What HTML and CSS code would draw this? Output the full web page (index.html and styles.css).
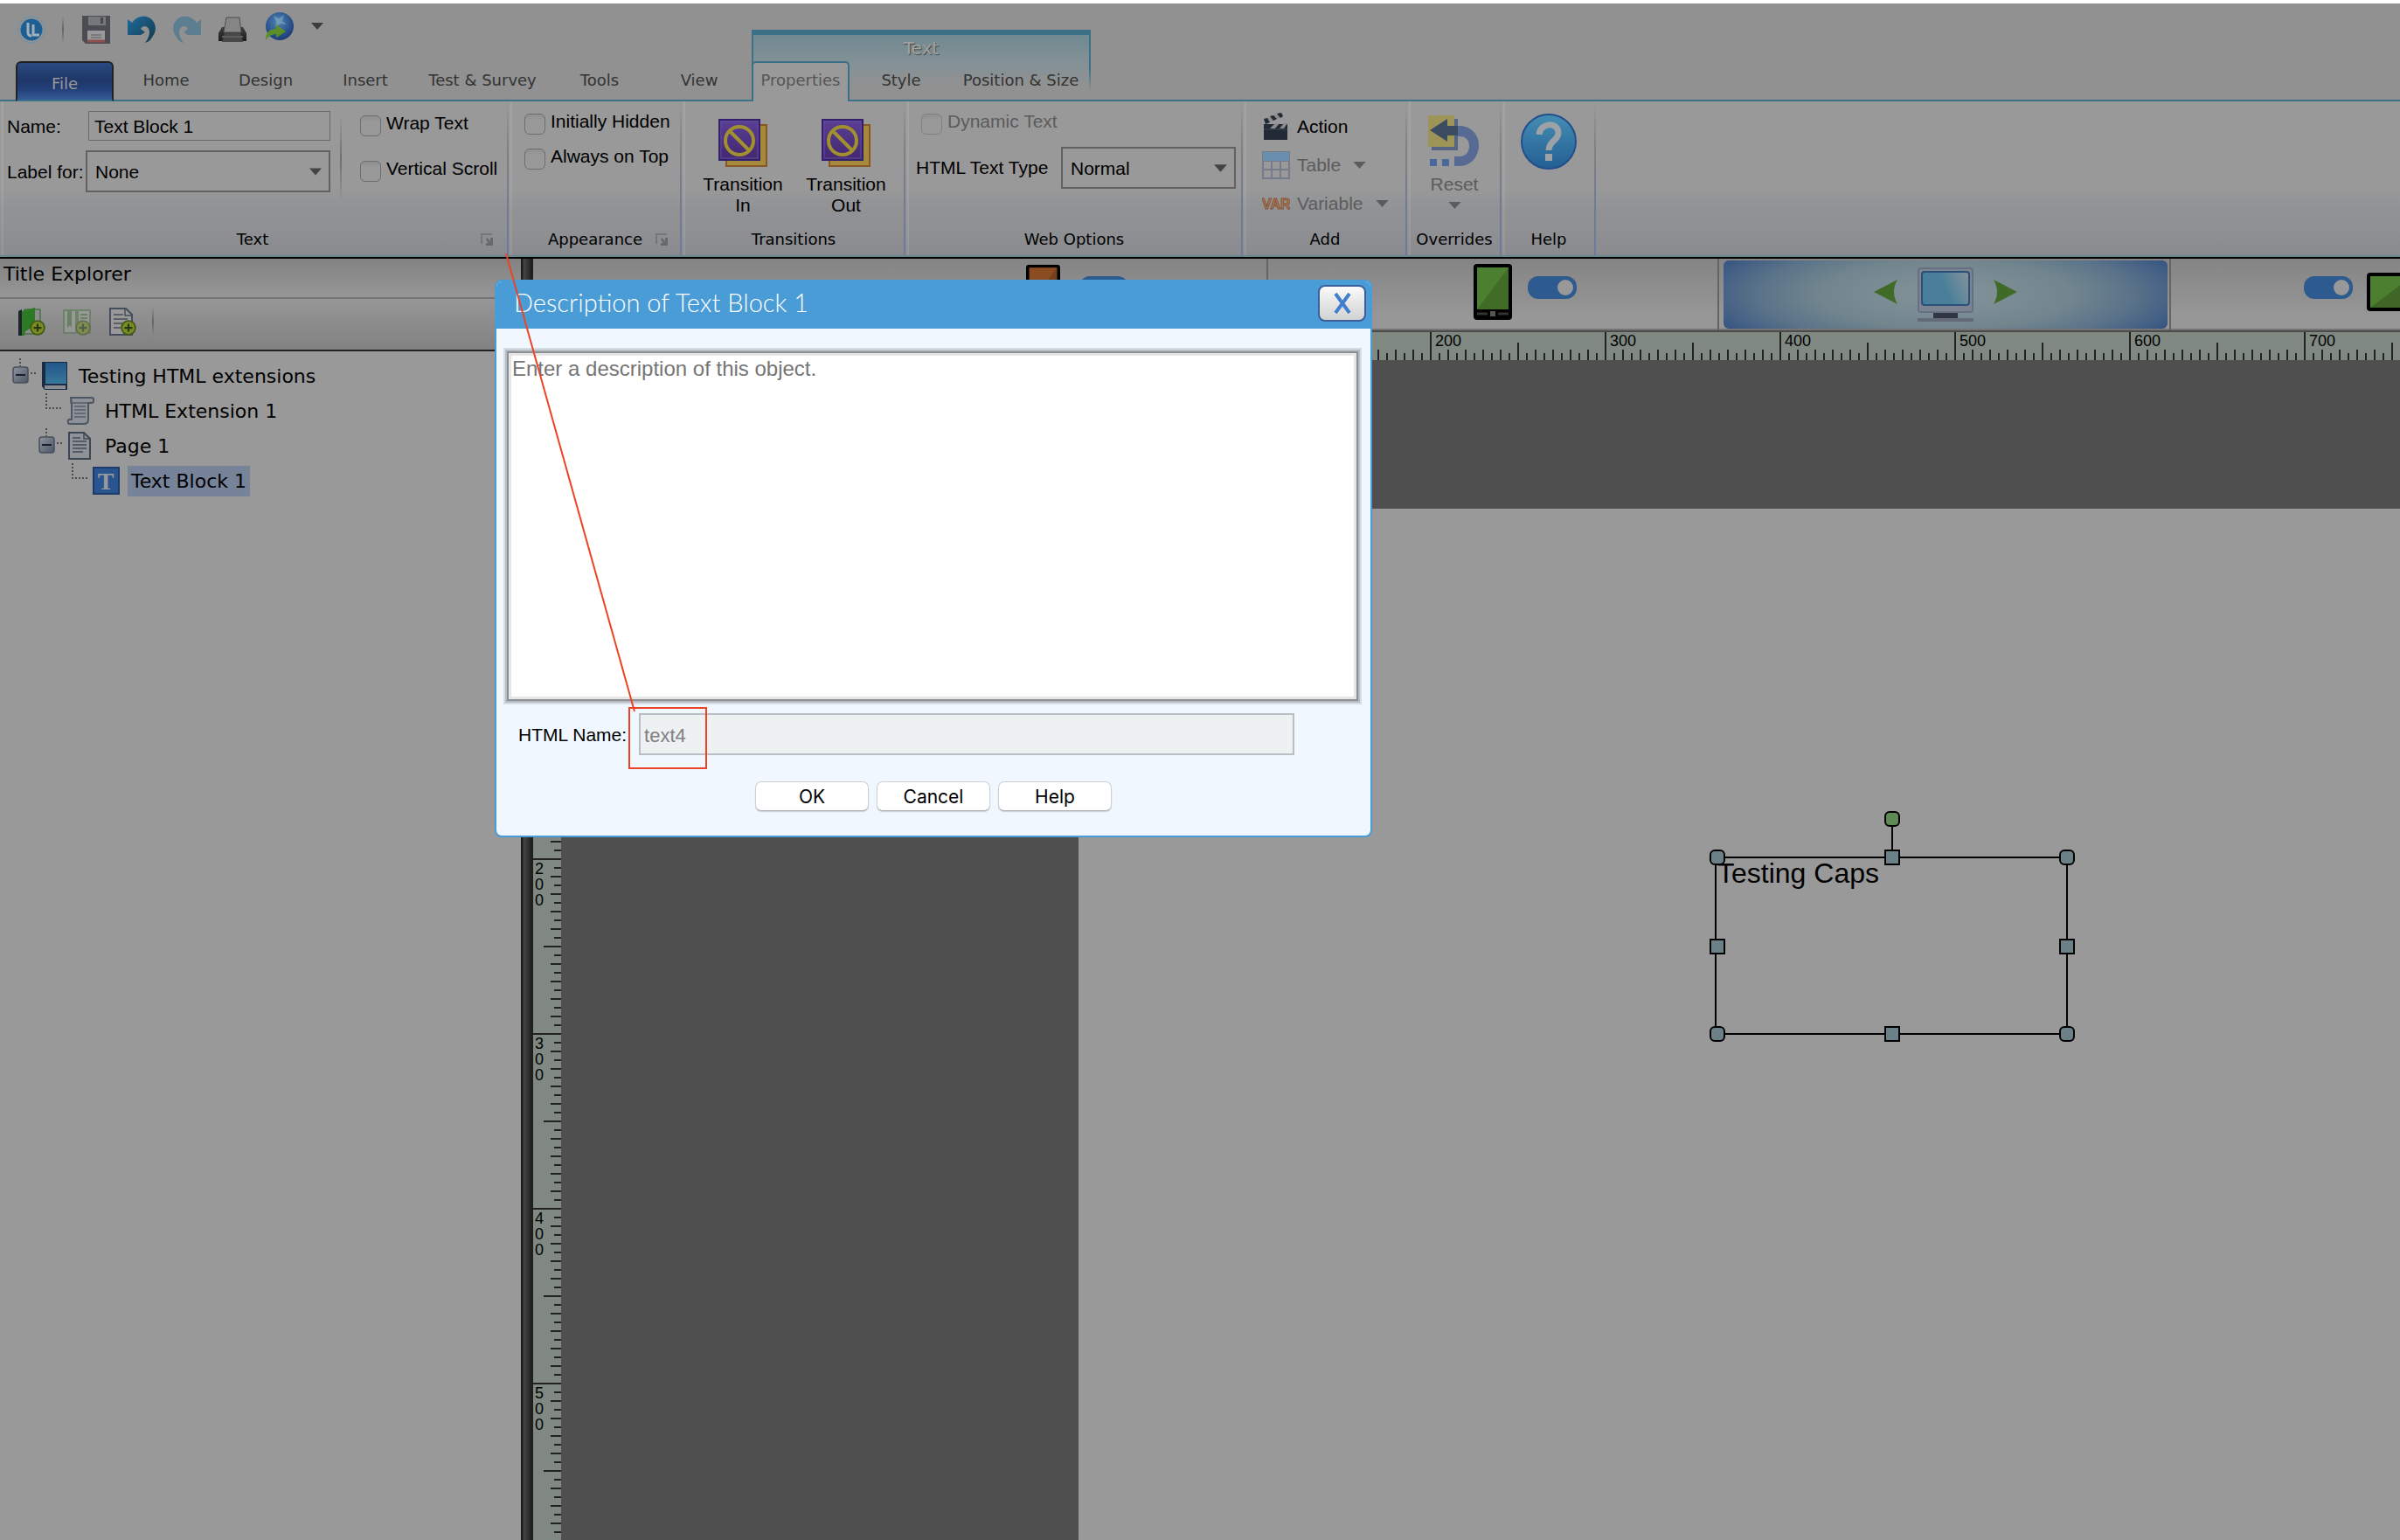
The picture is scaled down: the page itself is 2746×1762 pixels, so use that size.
FILE: index.html
```html
<!DOCTYPE html>
<html lang="en">
<head>
<meta charset="utf-8">
<title>Testing HTML extensions</title>
<link rel="stylesheet" href="styles.css">
</head>
<body>
<svg class="defs" aria-hidden="true">
  <defs>
    <linearGradient id="gPurple" x1="0" y1="0" x2="0" y2="1"><stop offset="0" stop-color="#5a3f96"/><stop offset="1" stop-color="#42266f"/></linearGradient>
    <linearGradient id="gHelp" x1="0" y1="0" x2="0" y2="1"><stop offset="0" stop-color="#458db4"/><stop offset="1" stop-color="#235f93"/></linearGradient>
    <linearGradient id="gUndo" x1="0" y1="0" x2="1" y2="1"><stop offset="0" stop-color="#1d6c9c"/><stop offset="1" stop-color="#16374c"/></linearGradient>
    <linearGradient id="gPrint" x1="0" y1="0" x2="0" y2="1"><stop offset="0" stop-color="#3f3f3f"/><stop offset="1" stop-color="#1c1c1c"/></linearGradient>
    <radialGradient id="gGlobe" cx=".45" cy=".35" r=".65"><stop offset="0" stop-color="#4e86b4"/><stop offset="1" stop-color="#1c3b78"/></radialGradient>
    <linearGradient id="gScreen" x1="0" y1=".3" x2="1" y2="0"><stop offset=".4" stop-color="#4a7f9b"/><stop offset="1" stop-color="#87939a"/></linearGradient>
    <linearGradient id="gBook" x1="0" y1="0" x2="0" y2="1"><stop offset="0" stop-color="#235588"/><stop offset="1" stop-color="#38789c"/></linearGradient>
    <linearGradient id="gBox" x1="0" y1="0" x2="1" y2="1"><stop offset="0" stop-color="#8e949c"/><stop offset="1" stop-color="#4c5666"/></linearGradient>
    <symbol id="caret" viewBox="0 0 16 9"><path d="M0 0h16L8 9z" fill="currentColor"/></symbol>
    <symbol id="launcher" viewBox="0 0 16 16"><path d="M1 13V2h12" fill="none" stroke="#747679" stroke-width="2"/><path d="M7 6l4 4V6h3v9H6v-3h3L6 8z" fill="#66686b"/></symbol>
    <symbol id="transition" viewBox="0 0 56 55">
      <rect x="9" y="7" width="46" height="47" fill="#a5893c" stroke="#8a5722" stroke-width="2"/>
      <rect x="1" y="1" width="46" height="46" fill="url(#gPurple)" stroke="#32206a" stroke-width="2"/>
      <rect x="3" y="3" width="42" height="42" fill="none" stroke="#634d9c"/>
      <circle cx="24" cy="25" r="16" fill="none" stroke="#a1902f" stroke-width="4"/>
      <path d="M13 14l22 22" stroke="#a1902f" stroke-width="4"/>
    </symbol>
    <symbol id="phone" viewBox="0 0 44 64">
      <rect width="44" height="64" rx="4" fill="#000"/><rect x="4" y="4" width="36" height="48" fill="currentColor"/>
      <path d="M40 4v48H4z" fill="#000" opacity=".15"/><path d="M4 57h12M28 57h12" stroke="#333" stroke-width="3"/><rect x="19" y="54" width="6" height="6" fill="#555"/>
    </symbol>
    <symbol id="toggle" viewBox="0 0 56 26"><rect width="56" height="26" rx="12" fill="#2d5b8f"/><circle cx="43" cy="13" r="9" fill="#999"/></symbol>
    <symbol id="plus" viewBox="0 0 16 16"><circle cx="8" cy="8" r="7" fill="#7c8c22" stroke="#3e5a16" stroke-width="1.6"/><path d="M8 4v8M4 8h8" stroke="#253a12" stroke-width="2"/></symbol>
    <symbol id="collapse" viewBox="0 0 34 40">
      <path d="M11 0v9M23 17h7" stroke="#333" stroke-width="1.5" stroke-dasharray="2 2"/>
      <rect x="3" y="10" width="17" height="18" rx="3" fill="url(#gBox)" stroke="#48505c" stroke-width="1.5"/><path d="M6 19h11" stroke="#15202e" stroke-width="2"/>
    </symbol>
    <symbol id="elbow" viewBox="0 0 34 40"><path d="M11 0v17h18" fill="none" stroke="#333" stroke-width="1.5" stroke-dasharray="2 2"/></symbol>
  </defs>
</svg>

<header class="topbar">
  <div class="quick">
    <button class="bare" aria-label="Application menu"><svg width="32" height="32" viewBox="0 0 32 32"><circle cx="16" cy="16" r="15" fill="#8e9599" stroke="#6f8fa3"/><circle cx="16" cy="16" r="12.500" fill="#1d5f93"/><path d="M12 8v11c0 3 2 4 4 4M18 10v12h7" fill="none" stroke="#a4b0b8" stroke-width="3"/></svg></button>
    <span class="quick-rule"></span>
    <button class="bare" aria-label="Save"><svg width="32" height="32" viewBox="0 0 32 32"><path d="M0 0h32v32H4l-4-4z" fill="#4c4d54"/><rect x="7" y="1" width="20" height="10" fill="#77787c"/><rect x="21" y="2" width="3" height="7" fill="#47484e"/><rect x="6" y="17" width="20" height="13" fill="#999"/><path d="M10 22h12M10 25h12" stroke="#6e7076" stroke-width="1.500"/><path d="M6 29h20" stroke="#8d4f4b" stroke-width="3"/></svg></button>
    <button class="bare" aria-label="Undo"><svg width="32" height="32" viewBox="0 0 32 32"><path d="M0 4l5 4C10 1 17 0 22 1c9 3 13 13 7 22-2 4-5 7-9 8 5-7 6-12 4-16-2-4-7-4-9 0l5 4-5 3-15 0z" fill="url(#gUndo)"/></svg></button>
    <button class="bare" aria-label="Redo"><svg width="32" height="32" viewBox="0 0 32 32"><path d="M32 4l-5 4C22 1 15 0 10 1 1 4-3 14 3 23c2 4 5 7 9 8-5-7-6-12-4-16 2-4 7-4 9 0l-5 4 5 3h15z" fill="#5c7e90"/></svg></button>
    <button class="bare" aria-label="Print"><svg width="32" height="32" viewBox="0 0 32 32"><path d="M0 20l4-7h24l4 7v9H0z" fill="url(#gPrint)"/><path d="M9 2h15l2 17H6z" fill="#858585" stroke="#505050"/><path d="M7 20h18l3 10H4z" fill="#484848"/><path d="M4 24h24" stroke="#5e5e5e" stroke-width="2"/></svg></button>
    <button class="bare raised" aria-label="Publish"><svg width="32" height="32" viewBox="0 0 32 32"><circle cx="16" cy="16" r="16" fill="url(#gGlobe)"/><path d="M9 4l6 3 6-4-2 7 5 4-7-1-6 4 1-6z" fill="#7fa3bd" opacity=".7"/><path d="M0 32c0-9 4-13 12-13v-5l11 8-11 7v-4c-5 0-8 2-12 7z" fill="#5a8f26"/></svg></button>
    <button class="bare more" aria-label="Customize toolbar"><svg width="14" height="8"><use href="#caret"/></svg></button>
  </div>
  <nav class="tabs">
    <a href="#" class="file-tab">File</a>
    <a href="#" class="tab">Home</a><a href="#" class="tab">Design</a><a href="#" class="tab">Insert</a><a href="#" class="tab wide">Test &amp; Survey</a><a href="#" class="tab">Tools</a><a href="#" class="tab">View</a>
    <div class="context">
      <span class="context-name">Text</span>
      <div class="context-tabs"><a href="#" class="tab active">Properties</a><a href="#" class="tab">Style</a><a href="#" class="tab wide">Position &amp; Size</a></div>
    </div>
  </nav>
</header>

<section class="ribbon">
  <div class="group g-text">
    <div class="group-body">
      <div class="fields">
        <label for="name">Name:</label><input id="name" class="name-box" type="text" value="Text Block 1">
        <label for="labelfor">Label for:</label>
        <div class="drop"><select id="labelfor"><option>None</option></select><svg width="14" height="9"><use href="#caret"/></svg></div>
      </div>
      <div class="checks roomy"><label><input type="checkbox">Wrap Text</label><label><input type="checkbox">Vertical Scroll</label></div>
    </div>
    <footer><span>Text</span><button class="bare" aria-label="Text settings"><svg width="16" height="16"><use href="#launcher"/></svg></button></footer>
  </div>
  <div class="group g-appearance">
    <div class="group-body"><div class="checks"><label><input type="checkbox">Initially Hidden</label><label><input type="checkbox">Always on Top</label></div></div>
    <footer><span>Appearance</span><button class="bare" aria-label="Appearance settings"><svg width="16" height="16"><use href="#launcher"/></svg></button></footer>
  </div>
  <div class="group g-transitions">
    <div class="group-body">
      <button class="big"><svg width="56" height="55"><use href="#transition"/></svg><span>Transition<br>In</span></button>
      <button class="big"><svg width="56" height="55"><use href="#transition"/></svg><span>Transition<br>Out</span></button>
    </div>
    <footer><span>Transitions</span></footer>
  </div>
  <div class="group g-web">
    <div class="group-body">
      <div class="checks"><label class="off"><input type="checkbox" disabled>Dynamic Text</label></div>
      <div class="type-row"><label for="texttype">HTML Text Type</label><div class="drop"><select id="texttype"><option>Normal</option></select><svg width="15" height="9"><use href="#caret"/></svg></div></div>
    </div>
    <footer><span>Web Options</span></footer>
  </div>
  <div class="group g-add">
    <div class="group-body">
      <button class="item"><svg width="32" height="32" viewBox="0 0 32 32"><path d="M2 13h27v18H2z" fill="#222a35"/><path d="M2 19h27" stroke="#3c4552"/><path d="M2 7L22 0l3 4L4 13z" fill="#8c8c8c"/><path d="M2 7l4-1 3 5-5 2zM9 4l4-1 4 4-4 2zM17 1l5-1 2 4-3 2z" fill="#222a35"/><path d="M9 18l6-6h5l-5 6zM20 18l5-6h4l-4 6z" fill="#8c8c8c"/></svg><span>Action</span></button>
      <button class="item off" disabled><svg width="32" height="32" viewBox="0 0 32 32"><rect width="32" height="32" fill="#757b88"/><rect x="1" y="1" width="30" height="10" fill="#6a8eae"/><path d="M2 12h8v8H2zM12 12h8v8h-8zM22 12h8v8h-8zM2 22h8v8H2zM12 22h8v8h-8zM22 22h8v8h-8z" fill="#999"/></svg><span>Table</span><svg width="15" height="8"><use href="#caret"/></svg></button>
      <button class="item off" disabled><svg width="32" height="32" viewBox="0 0 32 32"><text x="0" y="22" class="var-glyph">VAR</text></svg><span>Variable</span><svg width="15" height="8"><use href="#caret"/></svg></button>
    </div>
    <footer><span>Add</span></footer>
  </div>
  <div class="group g-narrow">
    <div class="group-body">
      <button class="big off" disabled><svg width="60" height="59" viewBox="0 0 60 59"><path d="M4 4h30v36H4z" fill="#556482"/><path d="M0 0h30v36H0z" fill="#9d9458"/><path d="M30 12h6c12 0 22 9 22 22S49 58 36 58h-6V47h6c7 0 11-5 11-12s-4-11-11-11h-6z" fill="#566a94"/><path d="M2 17L22 4v8h12v11H22v7z" fill="#3c4b60"/><path d="M2 50h8v8H2zM16 50h8v8h-8z" fill="#4c689a"/></svg><span>Reset</span><svg width="15" height="8"><use href="#caret"/></svg></button>
    </div>
    <footer><span>Overrides</span></footer>
  </div>
  <div class="group g-narrow">
    <div class="group-body"><button class="big help" aria-label="Help"><svg width="64" height="64" viewBox="0 0 64 64"><circle cx="32" cy="32" r="31" fill="url(#gHelp)" stroke="#214f8c" stroke-width="2"/><path d="M21 24C22 10 43 9 43 22c0 9-11 9-11 20" fill="none" stroke="#9da2a6" stroke-width="7"/><rect x="28" y="46" width="8" height="8" fill="#9da2a6"/></svg></button></div>
    <footer><span>Help</span></footer>
  </div>
</section>

<main class="workspace">
  <aside class="explorer">
    <h2>Title Explorer</h2>
    <div class="explorer-tools">
      <button class="bare" aria-label="Add chapter"><svg width="32" height="32" viewBox="0 0 32 32"><path d="M1 4l4-2v30H1z" fill="#1c2430"/><path d="M8 2h18v28H8z" fill="#8c8c8c" stroke="#2d5c22"/><path d="M5 4l15-4v20L8 28v4H5z" fill="#2c7a24"/><use href="#plus" x="14" y="14" width="18" height="18"/></svg></button>
      <button class="bare" aria-label="Add section" disabled><svg width="32" height="32" viewBox="0 0 32 32" opacity=".55"><path d="M1 3h14v26H1zM17 3h14v26H17z" fill="#a0a0a0" stroke="#55784e" stroke-width="2"/><path d="M5 3h5v20l-2-3-3 3z" fill="#47793f"/><path d="M20 8h8M20 12h8" stroke="#47793f" stroke-width="2"/><use href="#plus" x="14" y="14" width="18" height="18"/></svg></button>
      <button class="bare" aria-label="Add page"><svg width="32" height="32" viewBox="0 0 32 32"><path d="M2 1h18l7 7v23H2z" fill="#999" stroke="#454c5a" stroke-width="2"/><path d="M19 1v8h8M6 8h11M6 13h16M6 18h10M6 23h8" fill="none" stroke="#454c5a" stroke-width="1.500"/><use href="#plus" x="14" y="14" width="18" height="18"/></svg></button>
      <span class="tool-rule"></span>
    </div>
    <ul class="tree">
      <li class="node"><svg width="34" height="40"><use href="#collapse"/></svg><svg width="32" height="32" viewBox="0 0 32 32"><path d="M2 0h29v32H5l-3-4z" fill="#1b2b43"/><path d="M6 1h24v24H6z" fill="url(#gBook)"/><path d="M5 27h24v4H5z" fill="#8a8d92"/></svg><span>Testing HTML extensions</span></li>
      <li class="node level-1"><svg width="34" height="40"><use href="#elbow"/></svg><svg width="32" height="32" viewBox="0 0 32 32"><path d="M5 1h24c3 0 3 6 0 6h-4v19c0 3-2 5-5 5H4c-3 0-3-6 0-5h2V7z" fill="#8e9197" stroke="#4e5664" stroke-width="2"/><path d="M5 2v5h20M9 11h13M9 15h13M9 19h13M9 23h13" fill="none" stroke="#555c6b" stroke-width="1.500"/></svg><span>HTML Extension 1</span></li>
      <li class="node level-1"><svg width="34" height="40"><use href="#collapse"/></svg><svg width="32" height="32" viewBox="0 0 32 32"><path d="M3 1h17l7 7v23H3z" fill="#8f9296" stroke="#3f4653" stroke-width="2"/><path d="M20 1v7h7M7 7h9M7 11h16M7 15h16M7 19h16M7 23h12" fill="none" stroke="#434b5a" stroke-width="1.500"/></svg><span>Page 1</span></li>
      <li class="node level-2 selected"><svg width="34" height="40"><use href="#elbow"/></svg><svg class="t-icon" width="32" height="32" viewBox="0 0 32 32"><rect x="1" y="1" width="29" height="30" fill="#2a5490" stroke="#1b3b6c" stroke-width="2"/><text x="15" y="26" text-anchor="middle" class="t-glyph">T</text></svg><span>Text Block 1</span></li>
    </ul>
  </aside>
  <div class="splitter"></div>
  <div class="editor">
    <div class="devices">
      <div class="device first"></div>
      <div class="device second"><svg class="orange" width="39" height="58" viewBox="0 0 44 64"><use href="#phone"/></svg><svg width="56" height="26"><use href="#toggle"/></svg></div>
      <div class="device"><svg class="green" width="44" height="64"><use href="#phone"/></svg><svg width="56" height="26"><use href="#toggle"/></svg></div>
      <div class="device current"><div class="glow">
        <svg width="28" height="28" viewBox="0 0 28 28"><path d="M0 14L27 0q-8 14 0 28z" fill="#3f6b27"/></svg>
        <svg width="64" height="62" viewBox="0 0 64 62"><rect x="1" y="1" width="62" height="50" rx="3" fill="#7c8494" stroke="#676f82" stroke-width="2"/><rect x="5" y="5" width="54" height="38" rx="3" fill="url(#gScreen)" stroke="#2b5179" stroke-width="2"/><rect x="18" y="52" width="28" height="7" fill="#303642"/><rect y="58" width="64" height="4" fill="#656a78"/></svg>
        <svg width="28" height="28" viewBox="0 0 28 28"><path d="M28 14L1 0q8 14 0 28z" fill="#3f6b27"/></svg>
      </div></div>
      <div class="device last"><svg width="56" height="26"><use href="#toggle"/></svg><svg width="64" height="44" viewBox="0 0 64 44"><rect width="64" height="44" rx="4" fill="#000"/><rect x="4" y="4" width="48" height="36" fill="#4d7f30"/><path d="M52 4v36H4z" fill="#3f6527"/></svg></div>
    </div>
    <div class="ruler-x"><span class="stub"></span><span></span><span></span><span></span><span></span><span></span><span>200</span><span>300</span><span>400</span><span>500</span><span>600</span><span>700</span></div>
    <div class="stage">
      <div class="ruler-y"><span class="stub"></span><span></span><span>200</span><span>300</span><span>400</span><span>500</span></div>
      <div class="canvas">
        <div class="sheet">
          <div class="object">Testing Caps
            <i class="stem"></i><i class="grip round spin"></i>
            <i class="grip round nw"></i><i class="grip n"></i><i class="grip round ne"></i>
            <i class="grip w"></i><i class="grip e"></i>
            <i class="grip round sw"></i><i class="grip s"></i><i class="grip round se"></i>
          </div>
        </div>
      </div>
    </div>
  </div>
</main>

<form class="dialog" role="dialog" aria-labelledby="dlg-title">
  <header><h1 id="dlg-title">Description of Text Block 1</h1><button type="button" class="close" aria-label="Close"><svg width="20" height="24" viewBox="0 0 20 24"><path d="M2 1l16 22M18 1L2 23" stroke="#3f7fd0" stroke-width="4"/></svg></button></header>
  <div class="dialog-body">
    <textarea aria-label="Description" placeholder="Enter a description of this object."></textarea>
    <div class="name-row"><label for="htmlname">HTML Name:</label><input id="htmlname" type="text" value="text4" disabled></div>
    <div class="actions"><button type="button">OK</button><button type="button">Cancel</button><button type="button">Help</button></div>
  </div>
</form>

<svg class="callout" aria-hidden="true"><path d="M579 290L726 814" stroke-width="2"/><rect x="720" y="810" width="88" height="69" stroke-width="2"/></svg>
</body>
</html>
```

FILE: styles.css
```css
* { box-sizing: border-box; }
body {
  margin: 0;
  min-height: 100vh;
  display: flex;
  flex-direction: column;
  position: relative;
  overflow: hidden;
  background: #999;
  color: #000;
  font: 21px/24px "Liberation Sans", Arial, sans-serif;
}
svg { display: block; flex: none; }
.defs { position: absolute; width: 0; height: 0; }
button, input, select, textarea { font: inherit; color: inherit; margin: 0; }
a { color: inherit; text-decoration: none; }
.bare { padding: 0; border: 0; background: none; }

/* Title bar and tabs */
.topbar {
  border-top: 4px solid #fff;
  background: #919191;
  height: 116px;
  display: flex;
  flex-direction: column;
  justify-content: space-between;
}
.quick { display: flex; align-items: center; gap: 20px; padding: 14px 20px 0; height: 46px; }
.quick-rule { width: 2px; height: 32px; margin: 0 1px 0 -1px; background: linear-gradient(transparent, #666, transparent); }
.quick .raised { padding-bottom: 8px; margin-left: 2px; }
.quick .more { color: #3c3c3c; padding-bottom: 8px; }
.tabs {
  display: flex;
  align-items: flex-end;
  height: 82px;
  margin-top: -16px;
  padding-left: 18px;
  font: 18px/24px "DejaVu Sans", Verdana, sans-serif;
  color: #333;
  background: linear-gradient(#3a7186, #3a7186) left bottom / 100% 2px no-repeat;
}
.tab { width: 114px; height: 44px; padding-top: 8px; text-align: center; white-space: nowrap; }
.tab.wide { width: 154px; }
.file-tab {
  width: 112px;
  height: 46px;
  padding-top: 12px;
  margin: 0 3px 0 0;
  text-align: center;
  color: #999;
  border: 2px solid #222;
  border-bottom: 2px solid #3a7186;
  border-radius: 6px 6px 0 0;
  background: linear-gradient(#2a4a80, #1f3768 45%, #223f78 70%, #345b95);
}
.context {
  width: 388px;
  height: 82px;
  margin-left: 3px;
  display: flex;
  flex-direction: column;
  justify-content: space-between;
  border-top: 6px solid #3a7186;
  background:
    linear-gradient(#3a7186 50%, transparent 85%) left top / 2px 100% no-repeat,
    linear-gradient(#3a7186 50%, transparent 85%) right top / 2px 100% no-repeat,
    linear-gradient(#718a91, #849196 45%, #919191 75%, transparent 75%);
}
.context-name { margin-top: 2px; height: 28px; text-align: center; font-size: 20px; line-height: 26px; color: #a2a2a2; text-shadow: 1px 1px 1px #444; }
.context-tabs { display: flex; }
.context-tabs .tab { height: 46px; padding-top: 10px; }
.context-tabs .wide { width: 160px; }
.context-tabs .active {
  width: 112px;
  margin-right: 2px;
  padding-top: 8px;
  color: #555;
  background: #999;
  border: 2px solid #3a7186;
  border-bottom: 0;
  border-radius: 5px 5px 0 0;
}

/* Ribbon */
.ribbon {
  display: flex;
  height: 180px;
  border-bottom: 2px solid #000;
  background: linear-gradient(#6b868d, #6b868d) left bottom / 100% 2px no-repeat, linear-gradient(#999 55%, #8f9194 72%, #8f9194 80%, #888a8e);
}
.group {
  display: flex;
  flex-direction: column;
  justify-content: space-between;
  padding-bottom: 6px;
  background:
    linear-gradient(transparent, #7f8183 30%, #6f7c92 70%, #6b7c9a) right 0 / 2px 176px no-repeat,
    linear-gradient(90deg, transparent, rgba(255,255,255,.12)) left 0 / 4px 176px no-repeat;
}
.g-text { width: 582px; }
.g-appearance { width: 198px; }
.g-transitions { width: 256px; }
.g-web { width: 386px; }
.g-add { width: 188px; }
.g-narrow { width: 108px; }
.group footer { display: grid; grid-template-columns: 1fr auto 1fr; align-items: center; height: 28px; padding: 0 14px; font: 18px/28px "DejaVu Sans", Verdana, sans-serif; white-space: nowrap; }
.g-text footer { padding: 0 16px 0 12px; }
.g-narrow footer { padding: 0; }
.group footer span { grid-column: 2; }
.group footer button { justify-self: end; }
.g-text .group-body { display: flex; }
.fields { display: grid; grid-template-columns: 90px 280px; row-gap: 11px; align-content: start; align-items: center; padding: 11px 13px 0 8px; white-space: nowrap; background: linear-gradient(transparent, #6f6f6f, transparent) right 16px / 2px 100px no-repeat; height: 120px; }
.fields label { padding-top: 2px; }
.name-box { height: 34px; margin-left: 3px; width: 277px; padding: 1px 6px 0; border: 1px solid #6a6a6a; background: #999; }
.drop { display: grid; align-items: center; }
.drop select, .drop svg { grid-area: 1 / 1; }
.drop select { appearance: none; width: 100%; height: 48px; padding: 2px 9px 0; border: 2px solid #626262; border-radius: 0; background: transparent; opacity: 1; }
.drop svg { justify-self: end; margin-right: 10px; color: #444; pointer-events: none; }
.checks { display: flex; flex-direction: column; gap: 12px; padding: 11px 0 0 18px; }
.checks label { display: flex; gap: 6px; height: 28px; white-space: nowrap; }
.checks input { appearance: none; width: 24px; height: 24px; margin-top: 3px; border: 1px solid #6c6c6c; border-radius: 6px; background: linear-gradient(#909090, #999 30%); }
.checks.roomy { gap: 24px; padding: 13px 0 0 21px; }
.off { color: #5c5c5c; }
.off input { border-color: #808080; }
.g-transitions .group-body { display: flex; padding: 0 9px 0 11px; }
.big { display: flex; flex-direction: column; align-items: center; width: 118px; padding: 20px 0 0; border: 0; background: none; gap: 8px; }
.g-narrow .big { width: 108px; padding-top: 16px; }
.g-narrow .big.help { padding-top: 14px; }
.type-row { display: flex; align-items: center; justify-content: space-between; padding: 13px 8px 0 12px; }
.type-row .drop { width: 200px; }
.g-add .group-body { padding: 13px 0 0 22px; display: flex; flex-direction: column; gap: 12px; }
.item { display: flex; align-items: center; gap: 8px; height: 32px; padding: 0; border: 0; background: none; }
.item svg + span + svg { margin-left: 6px; }
.var-glyph { font: bold 16px "Liberation Sans", Arial, sans-serif; fill: #a58a4e; stroke: #8b4f3c; stroke-width: 1px; }
.t-glyph { font: bold 28px "Liberation Serif", "Times New Roman", serif; fill: #999; }
.t-icon { overflow: visible; }

/* Workspace */
.workspace { flex: 1; display: grid; grid-template-columns: 596px 14px minmax(0, 1fr); }
.explorer { display: flex; flex-direction: column; font: 22px/34px "DejaVu Sans", Verdana, sans-serif; }
.explorer h2 { margin: 0; height: 46px; padding: 1px 4px; font: inherit; background: linear-gradient(#828282, #959595 90%); border-bottom: 2px solid #757575; }
.explorer-tools { display: flex; align-items: center; gap: 20px; height: 60px; padding: 0 20px 6px; background: linear-gradient(#969696, #828282); border-bottom: 2px solid #222; }
.tool-rule { width: 2px; height: 34px; margin-left: -2px; background: linear-gradient(transparent, #666, transparent); }
.tree { list-style: none; margin: 0; padding: 8px 12px; }
.node { display: flex; align-items: center; height: 40px; }
.node > span { margin-left: 8px; padding: 1px 4px 0; white-space: nowrap; }
.level-1 { padding-left: 30px; }
.level-2 { padding-left: 60px; }
.selected > span { background: #768399; }
.splitter { background: linear-gradient(90deg, #1d1d1d 2px, #454545 3px, #333 8px, #222 11px, #1d1d1d); }
.editor { display: flex; flex-direction: column; min-width: 0; }
.devices { display: flex; height: 84px; border-bottom: 2px solid #4a4a4a; background: linear-gradient(#757575, #757575) left bottom / 100% 2px no-repeat, linear-gradient(#848484, #979797 80%); overflow: hidden; }
.device { flex: none; display: flex; gap: 18px; width: 516px; padding: 6px 0 0 235px; border-right: 2px solid #646464; }
.device svg:nth-child(2) { margin-top: 14px; }
.device.first { width: 325px; padding: 0; border: 0; }
.device.second { gap: 22px; padding-left: 239px; }
.device.current { padding: 2px 2px 2px 5px; width: 517px; }
.glow { flex: 1; display: flex; align-items: center; justify-content: center; gap: 22px; border-radius: 6px; background: radial-gradient(ellipse 62% 110% at center, #85939a, #72868e 45%, #5a7389 68%, #2a4a80); }
.device .glow svg:nth-child(2) { margin-top: 0; }
.glow svg:nth-child(odd) { margin-bottom: 6px; }
.device.last { padding: 20px 0 0 152px; gap: 16px; border: 0; width: 400px; }
.device.last svg:nth-child(1) { margin-top: 0; }
.device.last svg:nth-child(2) { margin-top: -4px; }
.orange { color: #8a4c20; }
.green { color: #4d7f30; }

/* One ruler step of 100 units is 200 pixels; marks every 5, 10, 50 and 100 units */
.ruler-x {
  display: flex;
  flex: none;
  height: 32px;
  overflow: hidden;
  font-size: 18px;
  line-height: 20px;
  background:
    linear-gradient(90deg, #222 2px, transparent 2px) 26px 100% / 200px 32px repeat-x,
    linear-gradient(90deg, #222 2px, transparent 2px) 26px 100% / 100px 20px repeat-x,
    linear-gradient(90deg, #222 2px, transparent 2px) 26px 100% / 20px 12px repeat-x,
    linear-gradient(90deg, #222 2px, transparent 2px) 26px 100% / 10px 8px repeat-x,
    #7f8982;
}
.ruler-x span { flex: none; width: 200px; padding-left: 5px; }
.ruler-x .stub { width: 27px; }
.stage { flex: 1; display: flex; min-height: 0; }
.ruler-y {
  width: 32px;
  overflow: hidden;
  font-size: 18px;
  line-height: 18px;
  background:
    linear-gradient(#222 2px, transparent 2px) 100% 170px / 32px 200px repeat-y,
    linear-gradient(#222 2px, transparent 2px) 100% 170px / 20px 100px repeat-y,
    linear-gradient(#222 2px, transparent 2px) 100% 170px / 12px 20px repeat-y,
    linear-gradient(#222 2px, transparent 2px) 100% 170px / 8px 10px repeat-y,
    #7f8982;
}
.ruler-y span { display: block; width: 12px; height: 200px; margin-left: 2px; padding-top: 3px; word-break: break-all; }
.ruler-y .stub { margin-top: 170px; }
.canvas { flex: 1; padding: 170px 0 0 592px; background: #4f4f4f; display: flex; }
.sheet { flex: 1; position: relative; background: #999; }
.object { position: absolute; left: 728px; top: 398px; width: 404px; height: 204px; padding: 0 1px; border: 2px solid #000; font-size: 32px; line-height: 34px; }
.grip { position: absolute; width: 18px; height: 18px; border: 2px solid #000; background: #6c8087; }
.grip.round { border-radius: 6px; }
.nw, .w, .sw { left: -8px; }
.n, .s, .spin { left: 192px; }
.ne, .e, .se { right: -10px; }
.nw, .n, .ne { top: -10px; }
.w, .e { top: 92px; }
.sw, .s, .se { bottom: -10px; }
.grip.spin { top: -54px; background: #5f8a56; }
.stem { position: absolute; left: 200px; top: -38px; width: 2px; height: 30px; background: #000; }

/* Description dialog */
.dialog { position: absolute; left: 566px; top: 320px; width: 1004px; border: 2px solid #4a9cd6; border-radius: 8px; background: #f0f7ff; overflow: hidden; }
.dialog header { display: flex; align-items: center; justify-content: space-between; height: 54px; padding: 0 5px 0 20px; background: #4a9cd6; color: #fff; }
.dialog h1 { margin: 0 0 6px; font: 300 29px/34px Lato, sans-serif; }
.close { display: grid; place-items: center; width: 55px; height: 42px; margin-bottom: 4px; padding: 0; border: 2px solid #3c5f9c; border-radius: 8px; background: linear-gradient(#fafafa, #d2d2d2); }
.dialog-body { padding: 26px 12px 28px; }
textarea { display: block; width: 974px; height: 400px; padding: 4px 4px; resize: none; border: 2px solid #8d8e91; outline: 0; background: #fff; font-size: 24px; line-height: 28px; box-shadow: 0 0 0 2px #b7bdc4, 0 0 0 4px #d5dde5, inset 0 0 0 3px #e6e6e6; }
textarea::placeholder { color: #757575; opacity: 1; }
.name-row { display: flex; align-items: center; gap: 14px; padding: 14px 14px 0 13px; white-space: nowrap; }
.name-row label { padding-top: 1px; }
.name-row input { width: 750px; height: 48px; padding: 4px 4px 0; border: 2px solid #b8bec3; background: #edf1f2; color: #808080; font-size: 22px; }
.actions { display: flex; justify-content: center; gap: 9px; padding: 30px 0 0; }
.actions button { width: 130px; height: 34px; padding: 2px 0 0; border: 1px solid #cdd1d6; border-bottom-color: #aeb2b6; border-radius: 7px; background: #fff; font: 21px/24px Inter, sans-serif; box-shadow: 0 1px 1px #c9ced4; }

/* Callout drawn over the dialog */
.callout { position: absolute; inset: 0; width: 100%; height: 100%; pointer-events: none; fill: none; stroke: #ec4325; }
```
